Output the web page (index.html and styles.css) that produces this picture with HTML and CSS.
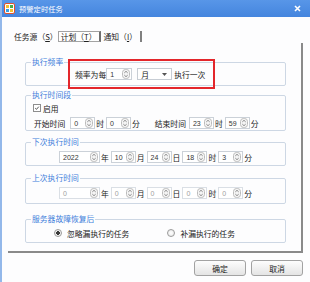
FILE: index.html
```html
<!DOCTYPE html>
<html lang="zh-CN">
<head>
  <meta charset="UTF-8">
  <title>预警定时任务</title>
  <link rel="stylesheet" href="styles.css">
</head>
<body>
  <svg class="defs" width="0" height="0">
    <symbol id="spin-btn" viewBox="0 0 8 10">
      <rect x="0.5" y="0.5" width="7" height="9" rx="3" fill="#f5f5f5" stroke="#bcbcbc"/>
      <path d="M2.3 3.9 L4 2.3 L5.7 3.9 M2.3 6.1 L4 7.7 L5.7 6.1" fill="none" stroke="#7d7d7d" stroke-width="0.9"/>
    </symbol>
  </svg>

  <div class="window">
    <div class="titlebar">
      <svg class="app-icon" viewBox="0 0 11 11">
        <rect x="0.5" y="0.5" width="10" height="10" rx="1.5" fill="#fff" stroke="#e0532c"/>
        <rect x="2" y="2" width="3" height="3" fill="#f5c12e"/>
        <rect x="6" y="2" width="3" height="3" fill="#48ad4a"/>
        <rect x="2" y="6" width="3" height="3" fill="#3a9fe0"/>
        <rect x="6" y="6" width="3" height="3" fill="#f5c12e"/>
      </svg>
      <span class="title">预警定时任务</span>
      <svg class="close" viewBox="0 0 7 7">
        <path d="M1 1 L6 6 M6 1 L1 6" stroke="#fff" stroke-width="1.6"/>
      </svg>
    </div>

    <div class="tabs">
      <span class="tab">任务源（<u>S</u>）</span>
      <span class="tab tab-active">计划（<u>T</u>）</span>
      <span class="tab">通知（<u>I</u>）</span>
      <span class="tab-end"></span>
    </div>

    <div class="panel">
      <fieldset class="group group-freq">
        <legend>执行频率</legend>
        <div class="row row-freq">
          <div class="freq">
            <span>频率为每</span>
            <span class="spin spin-freq"><span class="spin-val">1</span><svg><use href="#spin-btn"/></svg></span>
            <span class="combo">月<svg viewBox="0 0 5 3"><path d="M0 0 H5 L2.5 3 Z" fill="#555"/></svg></span>
            <span class="after">执行一次</span>
            <span class="mark"></span>
          </div>
        </div>
      </fieldset>

      <fieldset class="group group-range">
        <legend>执行时间段</legend>
        <div class="row row-check">
          <span class="check"><svg viewBox="0 0 8 8"><path d="M1.6 4.2 L3.3 5.8 L6.4 2.2" fill="none" stroke="#333" stroke-width="1.1"/></svg></span>
          <span class="check-label">启用</span>
        </div>
        <div class="row row-time">
          <span>开始时间</span>
          <span class="spin spin-first"><span class="spin-val">0</span><svg><use href="#spin-btn"/></svg></span>
          <span class="unit">时</span>
          <span class="spin"><span class="spin-val">0</span><svg><use href="#spin-btn"/></svg></span>
          <span class="unit">分</span>
          <span class="time-end">结束时间</span>
          <span class="spin spin-end"><span class="spin-val">23</span><svg><use href="#spin-btn"/></svg></span>
          <span class="unit">时</span>
          <span class="spin"><span class="spin-val">59</span><svg><use href="#spin-btn"/></svg></span>
          <span class="unit">分</span>
        </div>
      </fieldset>

      <fieldset class="group group-next">
        <legend>下次执行时间</legend>
        <div class="row row-date">
          <span class="spin spin-wide"><span class="spin-val">2022</span><svg><use href="#spin-btn"/></svg></span>
          <span class="unit">年</span>
          <span class="spin"><span class="spin-val">10</span><svg><use href="#spin-btn"/></svg></span>
          <span class="unit">月</span>
          <span class="spin"><span class="spin-val">24</span><svg><use href="#spin-btn"/></svg></span>
          <span class="unit">日</span>
          <span class="spin"><span class="spin-val">18</span><svg><use href="#spin-btn"/></svg></span>
          <span class="unit">时</span>
          <span class="spin"><span class="spin-val">3</span><svg><use href="#spin-btn"/></svg></span>
          <span class="unit">分</span>
        </div>
      </fieldset>

      <fieldset class="group group-last">
        <legend>上次执行时间</legend>
        <div class="row row-date disabled">
          <span class="spin spin-wide"><span class="spin-val">0</span><svg><use href="#spin-btn"/></svg></span>
          <span class="unit">年</span>
          <span class="spin"><span class="spin-val">0</span><svg><use href="#spin-btn"/></svg></span>
          <span class="unit">月</span>
          <span class="spin"><span class="spin-val">0</span><svg><use href="#spin-btn"/></svg></span>
          <span class="unit">日</span>
          <span class="spin"><span class="spin-val">0</span><svg><use href="#spin-btn"/></svg></span>
          <span class="unit">时</span>
          <span class="spin"><span class="spin-val">0</span><svg><use href="#spin-btn"/></svg></span>
          <span class="unit">分</span>
        </div>
      </fieldset>

      <fieldset class="group group-recover">
        <legend>服务器故障恢复后</legend>
        <div class="row row-radio">
          <span class="radio radio-on"></span>
          <span class="radio-label">忽略漏执行的任务</span>
          <span class="radio radio-second"></span>
          <span class="radio-label">补漏执行的任务</span>
        </div>
      </fieldset>
    </div>

    <div class="actions">
      <button>确定</button>
      <button>取消</button>
    </div>
  </div>
</body>
</html>
```

FILE: styles.css
```css
body {
  margin: 0;
  width: 310px;
  height: 282px;
  overflow: hidden;
  font-family: "Noto Sans CJK SC", sans-serif;
  font-size: 7.8px;
  color: #222;
  background: #fff;
}
.defs {
  position: absolute;
}
.window {
  height: 282px;
  border-left: 2px solid #93b8ea;
  display: flex;
  flex-direction: column;
  background: #fdfdfe;
}

/* title bar */
.titlebar {
  flex: none;
  height: 17px;
  display: flex;
  align-items: center;
  padding: 0 9px 0 2px;
  background: linear-gradient(#5896e8, #4485de);
  color: #fff;
}
.app-icon {
  width: 11px;
  height: 11px;
  margin-right: 4px;
}
.title {
  flex: 1;
  font-size: 7.3px;
}
.close {
  width: 7px;
  height: 7px;
}

/* tabs */
.tabs {
  flex: none;
  display: flex;
  align-items: center;
  height: 11px;
  margin-top: 14px;
  padding-left: 12px;
  line-height: 11px;
}
.tab u {
  text-decoration: underline;
}
.tab-active {
  height: 11px;
  box-sizing: border-box;
  display: flex;
  align-items: center;
  padding: 0 2px;
  border: 1px solid #a3a3a3;
  border-right: 2px solid #6f6f6f;
  background: #fff;
}
.tab-active + .tab {
  margin-left: 3px;
}
.tab-end {
  width: 2px;
  height: 11px;
  margin-left: 3px;
  background: #808080;
}

/* panel */
.panel {
  flex: none;
  position: relative;
  height: 210px;
  box-sizing: border-box;
  margin: 1px 7px 0 6px;
  padding: 14px 15px 0 17px;
  border-right: 2px solid #8a8a8a;
  border-bottom: 2px solid #8a8a8a;
  display: flex;
  flex-direction: column;
}
.group {
  margin: 0;
  padding: 0 5px;
  min-width: 0;
  border: 1px solid #cdd7e4;
  border-radius: 2px;
}
.group legend {
  padding: 0 1px;
  line-height: 10px;
  color: #3d7edb;
}
.group-freq {
  padding-top: 1px;
  padding-bottom: 5px;
}
.group-range {
  margin-top: 4px;
  padding-top: 3px;
  padding-bottom: 1px;
}
.group-next {
  margin-top: 6px;
  padding-top: 4px;
  padding-bottom: 2px;
}
.group-last {
  margin-top: 7px;
  padding-top: 4px;
  padding-bottom: 4px;
}
.group-recover {
  margin-top: 10px;
  padding-top: 3px;
  padding-bottom: 3px;
}

.row {
  display: flex;
  align-items: center;
  height: 12px;
  white-space: nowrap;
}
.row-freq {
  padding-left: 44px;
}
.row-check {
  height: 10px;
  padding-left: 2px;
}
.row-time {
  margin-top: 4px;
  padding-left: 3px;
}
.row-date {
  padding-left: 28px;
}
.row-radio {
  padding-left: 23px;
}

/* frequency line + annotation */
.freq {
  position: relative;
  display: flex;
  align-items: center;
  height: 12px;
}
.combo {
  width: 35px;
  height: 12px;
  box-sizing: border-box;
  margin-left: 5px;
  padding: 0 4px 0 3px;
  display: flex;
  align-items: center;
  justify-content: space-between;
  border: 1px solid #c7cdd4;
  background: #fff;
}
.combo svg {
  width: 5px;
  height: 3px;
}
.after {
  margin-left: 2px;
}
.mark {
  position: absolute;
  left: -7px;
  top: -9px;
  width: 147px;
  height: 30px;
  box-sizing: border-box;
  border: 2px solid #e3262b;
}

/* spinners */
.spin {
  width: 25px;
  height: 12px;
  box-sizing: border-box;
  display: flex;
  align-items: center;
  padding: 0 1px 0 3px;
  border: 1px solid #cbd1d8;
  background: #fff;
  font-family: "Liberation Sans", sans-serif;
  font-size: 7px;
  color: #333;
}
.spin-val {
  flex: 1;
}
.spin svg {
  width: 8px;
  height: 10px;
}
.spin-freq {
  width: 26px;
}
.spin-wide {
  width: 41px;
}
.spin-first {
  margin-left: 5px;
}
.spin-end {
  margin-left: 3px;
}
.unit {
  margin: 0 2px 0 1px;
}
.time-end {
  margin-left: 13px;
}
.disabled .spin {
  color: #a0a0a0;
  border-color: #dadfe5;
}

/* check & radio */
.check {
  width: 8px;
  height: 8px;
  box-sizing: border-box;
  border: 1px solid #8e8e8e;
  background: #fff;
  display: flex;
}
.check svg {
  width: 6px;
  height: 6px;
}
.check-label {
  margin-left: 2px;
}
.radio {
  width: 8px;
  height: 8px;
  box-sizing: border-box;
  border: 1px solid #9a9a9a;
  border-radius: 50%;
  background: radial-gradient(#fff, #e6e6e6);
}
.radio-on {
  background: radial-gradient(#3a3a3a 0 1.6px, #f2f2f2 2px);
}
.radio-label {
  margin-left: 5px;
}
.radio-second {
  margin-left: 38px;
}

/* buttons */
.actions {
  flex: none;
  display: flex;
  justify-content: flex-end;
  gap: 5px;
  margin: 7px 7px 0 0;
}
.actions button {
  width: 52px;
  height: 16px;
  padding: 0;
  font-family: "Noto Sans CJK SC", sans-serif;
  font-size: 7.8px;
  color: #222;
  border: 1px solid #a2a2a2;
  border-radius: 3px;
  background: linear-gradient(#fdfdfd, #e4e4e4);
}
```
